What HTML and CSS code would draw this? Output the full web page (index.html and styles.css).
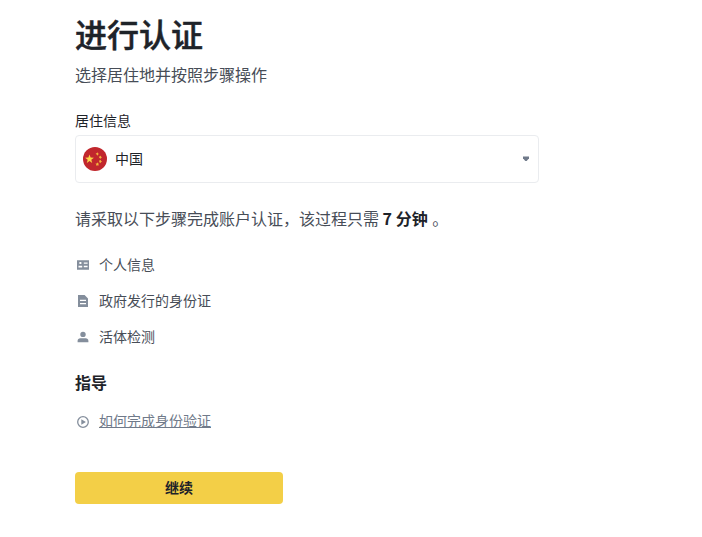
FILE: index.html
```
<!DOCTYPE html>
<html lang="zh-CN">
<head>
  <meta charset="UTF-8">
  <meta name="viewport" content="width=device-width, initial-scale=1.0">
  <title>进行认证</title>
  <link rel="stylesheet" href="styles.css">
</head>
<body>
  <main class="verify">
    <h1 class="verify-title">进行认证</h1>
    <p class="verify-sub">选择居住地并按照步骤操作</p>

    <!-- 居住地 -->
    <div class="field-label">居住信息</div>
    <div class="select">
      <svg class="select-flag" viewBox="0 0 24 24">
        <circle cx="12" cy="12" r="12" fill="#c1272d"/>
        <path fill="#fcd548" d="M6.5 7.6l1.1 3 3.3.1-2.6 2 .9 3.2-2.7-1.8-2.7 1.8.9-3.2-2.6-2 3.3-.1z"/>
        <g fill="#f5b83d">
          <path d="M12.6 6.6l1.2-.4.8-.9.4 1.2 1.1.5-1.1.5-.4 1.2-.8-1z"/>
          <path d="M15.8 9.3l1.2.1.8-.9.3 1.3 1 .5-1 .5-.3 1.2-.8-.9-1.2.1.6-.9z"/>
          <path d="M15.8 13.5l1.2.1.8-.9.3 1.3 1 .5-1 .5-.3 1.2-.8-.9-1.2.1.6-.9z"/>
          <path d="M12.5 16.6l1.3-.2.7-1.1.5 1.2 1.1.3-.8.9.1 1.2-1.1-.6-1.1.5.1-1.3z"/>
        </g>
      </svg>
      <span class="select-value">中国</span>
      <svg class="select-arrow" viewBox="0 0 8 6">
        <path fill="#707a8a" d="M1 .4h6v1.8L4.7 5H3.3L1 2.2z"/>
      </svg>
    </div>

    <p class="verify-tip">请采取以下步骤完成账户认证，该过程只需 <strong>7 分钟</strong> 。</p>

    <ul class="steps">
      <li class="row">
        <svg class="row-icon" viewBox="0 0 16 16">
          <path fill="#848e9c" fill-rule="evenodd" d="M2 3.3h12v9.4H2zM3.5 8.8v1.6h3.7V8.8zM4.4 5.1v2h2v-2zM8.8 5.5v1.3h3.8V5.5zM8.8 8.8v1.4h3.8V8.8z"/>
        </svg>
        <span>个人信息</span>
      </li>
      <li class="row">
        <svg class="row-icon" viewBox="0 0 16 16">
          <path fill="#848e9c" fill-rule="evenodd" d="M3 2h6.6L13 5.4V14H3zM5 6.7V8h6V6.7zM5 10v1.3h6V10z"/>
        </svg>
        <span>政府发行的身份证</span>
      </li>
      <li class="row">
        <svg class="row-icon" viewBox="0 0 16 16">
          <circle cx="8" cy="5.4" r="2.7" fill="#848e9c"/>
          <path fill="#848e9c" d="M2.6 13.2v-1.3c0-1.6 1.2-2.6 2.7-2.6h5.4c1.5 0 2.7 1 2.7 2.6v1.3z"/>
        </svg>
        <span>活体检测</span>
      </li>
    </ul>

    <h2 class="guide-title">指导</h2>
    <div class="row guide">
      <svg class="row-icon" viewBox="0 0 16 16">
        <circle cx="8" cy="8" r="5.3" fill="none" stroke="#848e9c" stroke-width="1.3"/>
        <path fill="#848e9c" d="M6.3 5.2v5.6L10.9 8z"/>
      </svg>
      <a class="guide-link" href="#">如何完成身份验证</a>
    </div>

    <button class="btn" type="button">继续</button>
  </main>
</body>
</html>
```
FILE: styles.css
```
* {
  box-sizing: border-box;
}
body {
  margin: 0;
  background: #fff;
  color: #1e2329;
  font-family: "Noto Sans CJK SC", sans-serif;
  font-size: 14px;
}
h1, h2, p, ul {
  margin: 0;
  padding: 0;
}
.verify {
  width: 464px;
  margin-left: 75px;
  padding-top: 13px;
}
.verify-title {
  font-size: 32px;
  line-height: 40px;
  font-weight: 500;
  -webkit-text-stroke: .5px #1e2329;
}
.verify-sub {
  margin-top: 9px;
  font-size: 16px;
  line-height: 24px;
  color: #474d57;
}
.field-label {
  margin-top: 23px;
  line-height: 22px;
}
.select {
  display: flex;
  align-items: center;
  height: 48px;
  margin-top: 4px;
  padding: 0 8px 0 7px;
  border: 1px solid #eaecef;
  border-radius: 4px;
}
.select-flag {
  width: 24px;
  height: 24px;
}
.select-value {
  flex: 1;
  margin-left: 8px;
  padding-bottom: 2px;
}
.select-arrow {
  width: 8px;
  height: 6px;
}
.verify-tip {
  margin-top: 23px;
  font-size: 16px;
  line-height: 24px;
  color: #474d57;
}
.verify-tip strong {
  margin-right: 1px;
  color: #1e2329;
  font-weight: 700;
}
.steps {
  display: flex;
  flex-direction: column;
  gap: 14px;
  margin-top: 23px;
  list-style: none;
}
.row {
  display: flex;
  align-items: center;
  line-height: 22px;
  color: #474d57;
}
.row-icon {
  width: 16px;
  height: 16px;
  margin-top: 2px;
  margin-right: 8px;
}
.guide-title {
  margin-top: 23px;
  font-size: 16px;
  line-height: 24px;
  font-weight: 700;
}
.guide {
  margin-top: 15px;
}
.guide .row-icon {
  margin-top: 4px;
}
.guide-link {
  color: #707a8a;
  text-decoration: underline;
}
.btn {
  display: block;
  width: 208px;
  height: 32px;
  margin-top: 41px;
  padding: 0 0 2px;
  border: 0;
  border-radius: 4px;
  background: #f3cf47;
  color: #1e2329;
  font-family: inherit;
  font-size: 14px;
  font-weight: 700;
}
```
